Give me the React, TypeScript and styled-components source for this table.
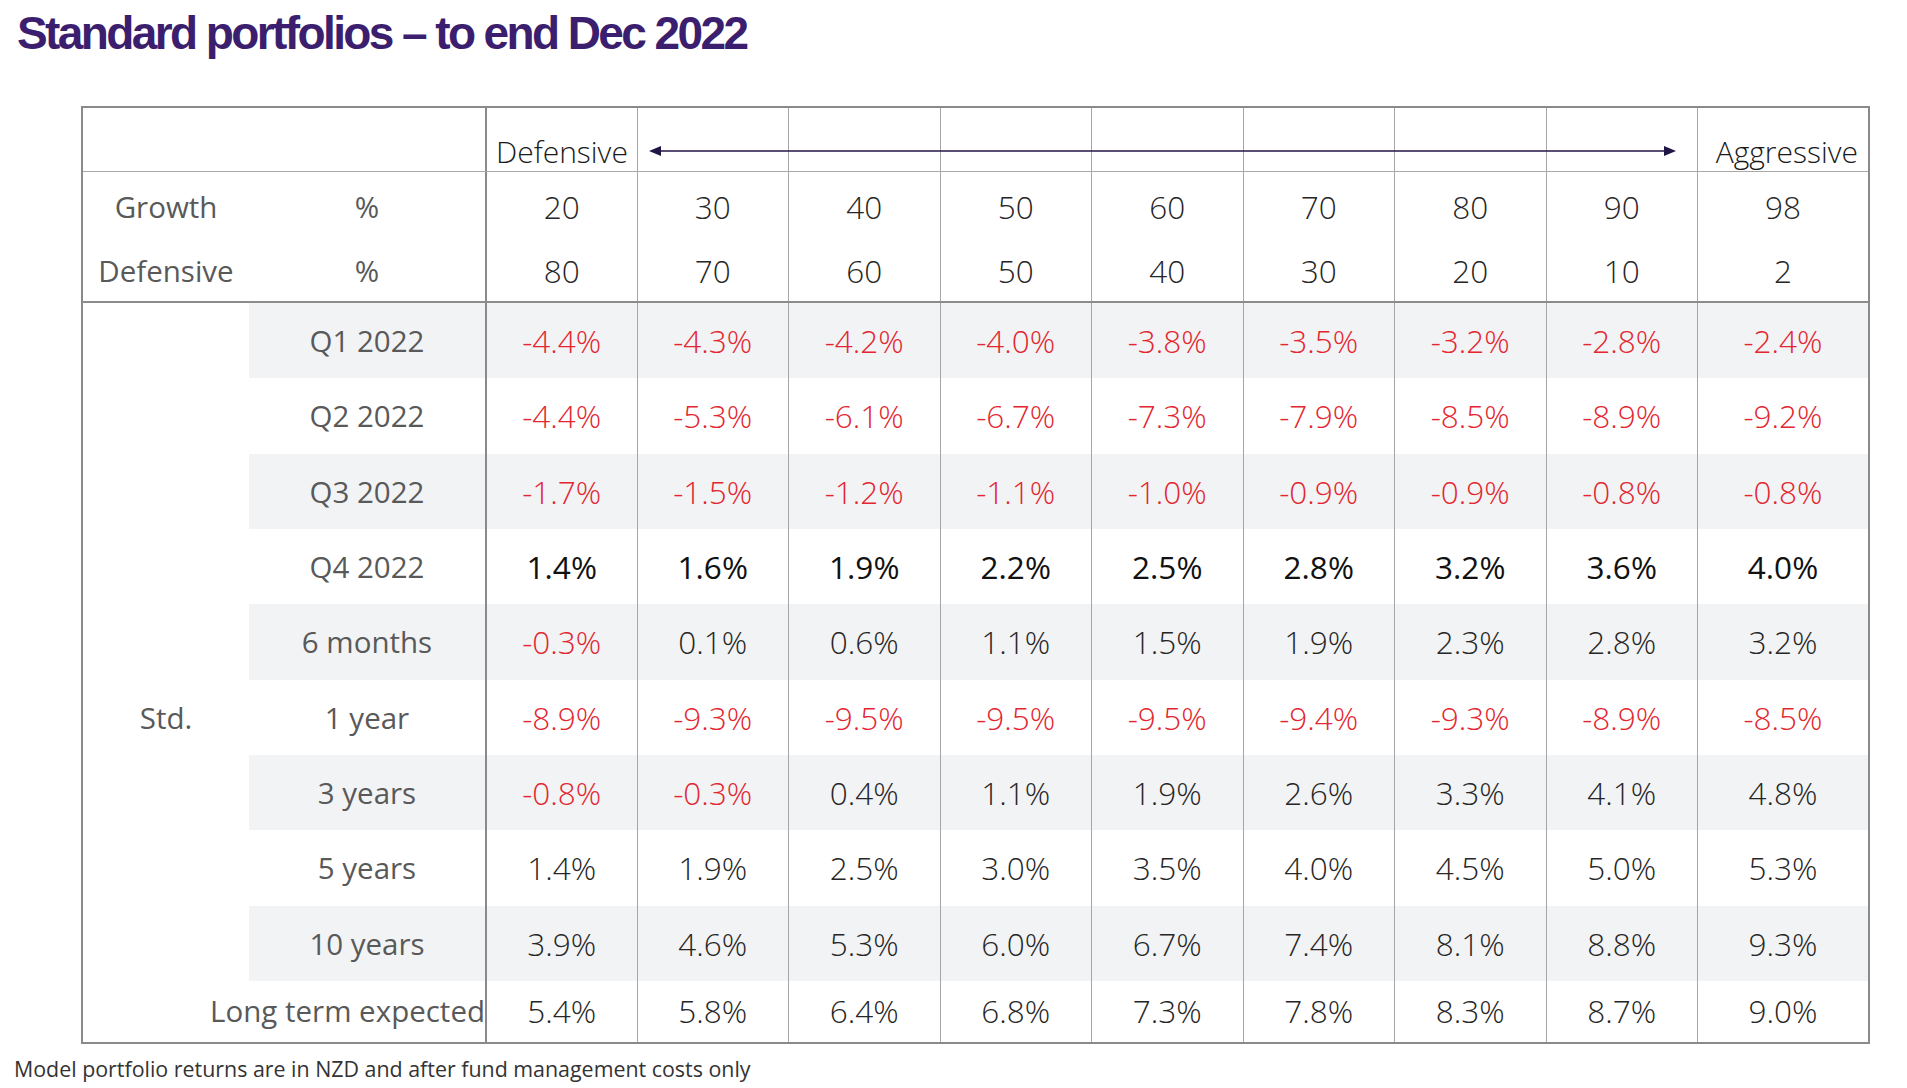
import React from "react";
import styled, { createGlobalStyle, css } from "styled-components";

const GlobalStyle = createGlobalStyle`
  html, body { margin: 0; padding: 0; background: #ffffff; }
  body { font-family: "Open Sans", "Liberation Sans", sans-serif; }
  #root { width: 1907px; height: 1088px; }
`;

const Page = styled.div`
  width: 1907px;
  height: 1088px;
  display: flex;
  flex-direction: column;
  overflow: hidden;
  box-sizing: border-box;
`;

const Title = styled.h1`
  margin: 0;
  padding: 11px 0 0 17px;
  height: 54px;
  box-sizing: border-box;
  font-family: "Liberation Sans", Arial, sans-serif;
  font-weight: 700;
  font-size: 46px;
  line-height: 44px;
  letter-spacing: -2.6px;
  color: #3b1e6e;
  white-space: nowrap;
`;

const Table = styled.div`
  position: relative;
  margin: 52px 0 0 81px;
  width: 1789px;
  border: 2px solid #8a8a8a;
  box-sizing: border-box;
  display: flex;
  flex-direction: column;
`;

const GRID = "166px 236px repeat(8, 151.5px) 171px";

const Row = styled.div<{ $h: number; $rule?: "thin" | "thick"; $shade?: boolean; $drop?: number }>`
  display: grid;
  grid-template-columns: ${GRID};
  height: ${(p) => p.$h}px;
  box-sizing: border-box;
  ${(p) => p.$drop && css`& > * { padding-top: ${p.$drop}px; }`}
  ${(p) => p.$rule === "thin" && css`border-bottom: 1px solid #a8a8a8;`}
  ${(p) => p.$rule === "thick" && css`border-bottom: 2px solid #8c8c8c;`}
  ${(p) =>
    p.$shade &&
    css`
      & > *:not(:first-child) {
        background: #f2f3f5;
      }
    `}
`;

const Cell = styled.div<{ $edge?: "first" | "div"; $tone?: "neg" | "pos" | "bold"; $head?: "left" | "right" }>`
  display: flex;
  align-items: center;
  justify-content: center;
  box-sizing: border-box;
  font-weight: 300;
  font-size: 31.5px;
  line-height: 36px;
  color: #262626;
  white-space: nowrap;
  ${(p) => p.$edge === "first" && css`border-left: 2px solid #8a8a8a;`}
  ${(p) => p.$edge === "div" && css`border-left: 1px solid #a6a6a6;`}
  ${(p) => p.$tone === "neg" && css`color: #e3262f;`}
  ${(p) => p.$tone === "bold" && css`font-weight: 400; color: #111111;`}
  ${(p) =>
    p.$head &&
    css`
      align-items: flex-end;
      padding: 0 10px 1px 9px;
      font-size: 30px;
      color: #1a1a1a;
      justify-content: ${p.$head === "left" ? "flex-start" : "flex-end"};
    `}
`;

const Label = styled.div<{ $span?: boolean; $align?: "right" }>`
  display: flex;
  align-items: center;
  justify-content: ${(p) => (p.$align === "right" ? "flex-end" : "center")};
  box-sizing: border-box;
  ${(p) => p.$span && css`grid-column: span 2;`}
  font-weight: 400;
  font-size: 29.5px;
  line-height: 36px;
  color: #595959;
  white-space: nowrap;
`;

const ArrowLayer = styled.svg`
  position: absolute;
  left: 566px;
  top: 36px;
  width: 1027px;
  height: 14px;
  overflow: visible;
  pointer-events: none;
`;

const Footnote = styled.p`
  margin: 12px 0 0 14px;
  font-family: "Open Sans", "Liberation Sans", sans-serif;
  font-weight: 400;
  font-size: 21.4px;
  line-height: 26px;
  color: #333333;
  white-space: nowrap;
`;

const growth = ["20", "30", "40", "50", "60", "70", "80", "90", "98"];
const defensive = ["80", "70", "60", "50", "40", "30", "20", "10", "2"];

type DataRowSpec = { label: string; values: string[]; bold?: boolean };

const rows: DataRowSpec[] = [
  { label: "Q1 2022", values: ["-4.4%", "-4.3%", "-4.2%", "-4.0%", "-3.8%", "-3.5%", "-3.2%", "-2.8%", "-2.4%"] },
  { label: "Q2 2022", values: ["-4.4%", "-5.3%", "-6.1%", "-6.7%", "-7.3%", "-7.9%", "-8.5%", "-8.9%", "-9.2%"] },
  { label: "Q3 2022", values: ["-1.7%", "-1.5%", "-1.2%", "-1.1%", "-1.0%", "-0.9%", "-0.9%", "-0.8%", "-0.8%"] },
  { label: "Q4 2022", values: ["1.4%", "1.6%", "1.9%", "2.2%", "2.5%", "2.8%", "3.2%", "3.6%", "4.0%"], bold: true },
  { label: "6 months", values: ["-0.3%", "0.1%", "0.6%", "1.1%", "1.5%", "1.9%", "2.3%", "2.8%", "3.2%"] },
  { label: "1 year", values: ["-8.9%", "-9.3%", "-9.5%", "-9.5%", "-9.5%", "-9.4%", "-9.3%", "-8.9%", "-8.5%"] },
  { label: "3 years", values: ["-0.8%", "-0.3%", "0.4%", "1.1%", "1.9%", "2.6%", "3.3%", "4.1%", "4.8%"] },
  { label: "5 years", values: ["1.4%", "1.9%", "2.5%", "3.0%", "3.5%", "4.0%", "4.5%", "5.0%", "5.3%"] },
  { label: "10 years", values: ["3.9%", "4.6%", "5.3%", "6.0%", "6.7%", "7.4%", "8.1%", "8.8%", "9.3%"] },
];

const longTerm = ["5.4%", "5.8%", "6.4%", "6.8%", "7.3%", "7.8%", "8.3%", "8.7%", "9.0%"];

const toneOf = (v: string, bold?: boolean): "neg" | "pos" | "bold" =>
  v.startsWith("-") ? "neg" : bold ? "bold" : "pos";

const ValueCells: React.FC<{ values: string[]; bold?: boolean }> = ({ values, bold }) => (
  <>
    {values.map((v, i) => (
      <Cell key={i} $edge={i === 0 ? "first" : "div"} $tone={toneOf(v, bold)}>
        {v}
      </Cell>
    ))}
  </>
);

export default function App() {
  return (
    <Page>
      <GlobalStyle />
      <Title>Standard portfolios – to end Dec 2022</Title>
      <Table>
        <Row $h={64} $rule="thin">
          <Label $span />
          <Cell $edge="first" $head="left">Defensive</Cell>
          {Array.from({ length: 7 }).map((_, i) => (
            <Cell key={i} $edge="div" />
          ))}
          <Cell $edge="div" $head="right">Aggressive</Cell>
        </Row>
        <Row $h={65} $drop={4}>
          <Label>Growth</Label>
          <Label>%</Label>
          {growth.map((v, i) => (
            <Cell key={i} $edge={i === 0 ? "first" : "div"}>{v}</Cell>
          ))}
        </Row>
        <Row $h={66} $rule="thick" $drop={4}>
          <Label>Defensive</Label>
          <Label>%</Label>
          {defensive.map((v, i) => (
            <Cell key={i} $edge={i === 0 ? "first" : "div"}>{v}</Cell>
          ))}
        </Row>
        {rows.map((r, idx) => (
          <Row key={r.label} $h={75.33} $shade={idx % 2 === 0} $drop={1}>
            <Label>{r.label === "1 year" ? "Std." : ""}</Label>
            <Label>{r.label}</Label>
            <ValueCells values={r.values} bold={r.bold} />
          </Row>
        ))}
        <Row $h={61}>
          <Label $span $align="right">Long term expected</Label>
          <ValueCells values={longTerm} />
        </Row>
        <ArrowLayer viewBox="0 0 1027 14">
          <line x1="10" y1="7" x2="1017" y2="7" stroke="#201545" strokeWidth="1.6" />
          <polygon points="0,7 12,2 12,12" fill="#201545" />
          <polygon points="1027,7 1015,2 1015,12" fill="#201545" />
        </ArrowLayer>
      </Table>
      <Footnote>Model portfolio returns are in NZD and after fund management costs only</Footnote>
    </Page>
  );
}
